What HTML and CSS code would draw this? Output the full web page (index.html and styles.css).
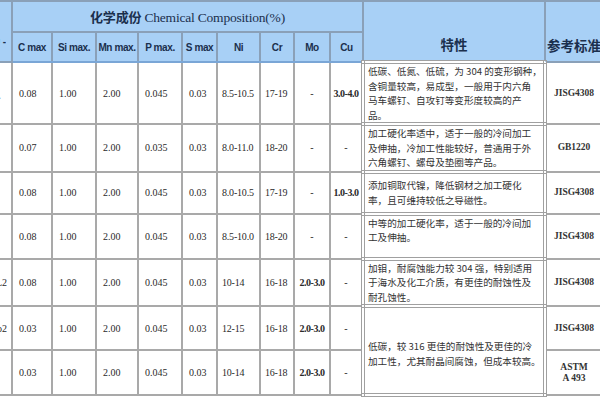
FILE: index.html
```html
<!DOCTYPE html>
<html>
<head>
<meta charset="utf-8">
<link rel="stylesheet" href="styles.css">
</head>
<body>
<table class="spec">
  <colgroup>
    <col class="w-lead"><col class="w-c"><col class="w-si"><col class="w-mn"><col class="w-p"><col class="w-s"><col class="w-ni"><col class="w-cr"><col class="w-mo"><col class="w-cu"><col class="w-feat"><col class="w-std">
  </colgroup>
  <thead>
    <tr class="h1">
      <th class="lead" rowspan="2"><div class="clip low">钢种 -</div></th>
      <th class="chem" colspan="9"><span class="zh">化学成份</span> Chemical Composition(%)</th>
      <th class="big" rowspan="2">特性</th>
      <th class="big std-h" rowspan="2">参考标准</th>
    </tr>
    <tr class="h2">
      <th class="lab">C max</th>
      <th class="lab">Si max.</th>
      <th class="lab">Mn max.</th>
      <th class="lab">P max.</th>
      <th class="lab">S max</th>
      <th class="lab">Ni</th>
      <th class="lab">Cr</th>
      <th class="lab">Mo</th>
      <th class="lab">Cu</th>
    </tr>
  </thead>
  <tbody>
    <tr class="r1">
      <td class="lead"><div class="clip">XM7、</div></td>
      <td>0.08</td><td>1.00</td><td>2.00</td><td>0.045</td><td>0.03</td><td class="tight">8.5-10.5</td><td class="tight">17-19</td>
      <td class="ctr">-</td><td class="ctr bold">3.0-4.0</td>
      <td class="feat">低碳、低氮、低硫，为 304 的变形钢种，<br>含铜量较高，易成型，一般用于内六角<br>马车螺钉、自攻钉等变形度较高的产<br>品。</td>
      <td class="std">JISG4308</td>
    </tr>
    <tr class="r2">
      <td class="lead"><div class="clip"></div></td>
      <td>0.07</td><td>1.00</td><td>2.00</td><td>0.035</td><td>0.03</td><td class="tight">8.0-11.0</td><td class="tight">18-20</td>
      <td class="ctr">-</td><td class="ctr">-</td>
      <td class="feat">加工硬化率适中，适于一般的冷间加工<br>及伸抽，冷加工性能较好，普通用于外<br>六角螺钉、螺母及垫圈等产品。</td>
      <td class="std">GB1220</td>
    </tr>
    <tr class="r3">
      <td class="lead"><div class="clip"></div></td>
      <td>0.08</td><td>1.00</td><td>2.00</td><td>0.045</td><td>0.03</td><td class="tight">8.0-10.5</td><td class="tight">17-19</td>
      <td class="ctr">-</td><td class="ctr bold">1.0-3.0</td>
      <td class="feat">添加铜取代镍，降低钢材之加工硬化<br>率，且可维持较低之导磁性。</td>
      <td class="std">JISG4308</td>
    </tr>
    <tr class="r4">
      <td class="lead"><div class="clip"></div></td>
      <td>0.08</td><td>1.00</td><td>2.00</td><td>0.045</td><td>0.03</td><td class="tight">8.5-10.0</td><td class="tight">18-20</td>
      <td class="ctr">-</td><td class="ctr">-</td>
      <td class="feat up">中等的加工硬化率，适于一般的冷间加<br>工及伸抽。</td>
      <td class="std">JISG4308</td>
    </tr>
    <tr class="r5">
      <td class="lead"><div class="clip">316J1L2</div></td>
      <td>0.08</td><td>1.00</td><td>2.00</td><td>0.045</td><td>0.03</td><td class="tight">10-14</td><td class="tight">16-18</td>
      <td class="ctr bold">2.0-3.0</td><td class="ctr">-</td>
      <td class="feat">加钼，耐腐蚀能力较 304 强，特别适用<br>于海水及化工介质，有更佳的耐蚀性及<br>耐孔蚀性。</td>
      <td class="std">JISG4308</td>
    </tr>
    <tr class="r6">
      <td class="lead"><div class="clip">316LMo2</div></td>
      <td>0.03</td><td>1.00</td><td>2.00</td><td>0.045</td><td>0.03</td><td class="tight">12-15</td><td class="tight">16-18</td>
      <td class="ctr bold">2.0-3.0</td><td class="ctr">-</td>
      <td class="feat low2" rowspan="2">低碳，较 316 更佳的耐蚀性及更佳的冷<br>加工性，尤其耐晶间腐蚀，但成本较高。</td>
      <td class="std">JISG4308</td>
    </tr>
    <tr class="r7">
      <td class="lead"><div class="clip"></div></td>
      <td>0.03</td><td>1.00</td><td>2.00</td><td>0.045</td><td>0.03</td><td class="tight">10-14</td><td class="tight">16-18</td>
      <td class="ctr bold">2.0-3.0</td><td class="ctr">-</td>
      <td class="std">ASTM<br>A 493</td>
    </tr>
  </tbody>
</table>
</body>
</html>
```

FILE: styles.css
```css
html, body {
  margin: 0;
  padding: 0;
  background: #ffffff;
  overflow: hidden;
  width: 600px;
  height: 400px;
}

.spec {
  border-collapse: collapse;
  table-layout: fixed;
  width: 602px;
  font-family: "Liberation Serif", "Noto Sans CJK SC", serif;
  font-size: 10px;
  color: #2a2a2a;
  border-top: 2px solid #5f7f9f;
}

.w-lead { width: 12px; }
.w-c { width: 40px; }
.w-si { width: 44px; }
.w-mn { width: 42px; }
.w-p { width: 44px; }
.w-s { width: 35px; }
.w-ni { width: 43px; }
.w-cr { width: 34px; }
.w-mo { width: 36px; }
.w-cu { width: 33px; }
.w-feat { width: 182px; }
.w-std { width: 57px; }

.spec th, .spec td {
  border: 2px solid #a9a9a9;
  padding: 0 0 0 6px;
  overflow: hidden;
  white-space: nowrap;
  vertical-align: middle;
  text-align: left;
}

.spec thead th {
  background: #a8d0f6;
  color: #1b2f4d;
  border-color: #8aa0b8;
  text-align: center;
  padding: 0;
}

.spec thead tr.h2 th {
  border-bottom: 2px solid #7aa6d6;
}

.h1 { height: 31px; }
.h2 { height: 30px; }

.chem {
  font-family: "Liberation Serif", "Noto Sans CJK SC", serif;
  font-size: 13.5px;
  font-weight: normal;
  letter-spacing: -0.2px;
  padding-top: 1px;
}

.chem .zh {
  font-weight: bold;
  font-size: 13px;
}

.big {
  font-family: "Noto Sans CJK SC", sans-serif;
  font-size: 13.5px;
  font-weight: bold;
}

.spec thead th.big {
  vertical-align: bottom;
  padding-bottom: 6px;
}

.spec thead th.std-h {
  text-align: left;
  padding-left: 1px;
  border-left: 2px solid #3f5d7d;
  overflow: visible;
}

.lab {
  font-family: "Liberation Sans", "DejaVu Sans", sans-serif;
  font-size: 10px;
  font-weight: bold;
  letter-spacing: -0.4px;
}

.spec .lead {
  padding: 0;
  border-left: none;
}

.clip {
  display: flex;
  justify-content: flex-end;
  width: 7px;
  overflow: hidden;
  white-space: nowrap;
  font-size: 10px;
}

.clip.low {
  padding-top: 20px;
  width: 6px;
  font-family: "Liberation Sans", sans-serif;
  font-weight: bold;
}

.r1 { height: 60px; }
.r2 { height: 46px; }
.r3 { height: 42px; }
.r4 { height: 45px; }
.r5 { height: 45px; }
.r6 { height: 44px; }
.r7 { height: 45px; }

.spec td.tight {
  padding-left: 4px;
  letter-spacing: -0.2px;
}

.spec td.ctr {
  text-align: center;
  padding: 0;
}

.spec td.bold {
  font-weight: bold;
  letter-spacing: -0.5px;
}

.spec td.feat {
  border: 4px double #a0a0a0;
  padding: 0 0 0 3px;
  font-family: "Noto Sans CJK SC", sans-serif;
  font-size: 9.6px;
  line-height: 14.5px;
  color: #333;
  letter-spacing: 0;
}

.spec td.feat.up {
  padding-bottom: 12px;
}

.spec td.feat.low2 {
  padding-top: 6px;
}

.spec td.std {
  text-align: center;
  padding: 0;
  font-weight: bold;
  font-size: 9.5px;
  line-height: 11px;
  color: #333;
}
```
